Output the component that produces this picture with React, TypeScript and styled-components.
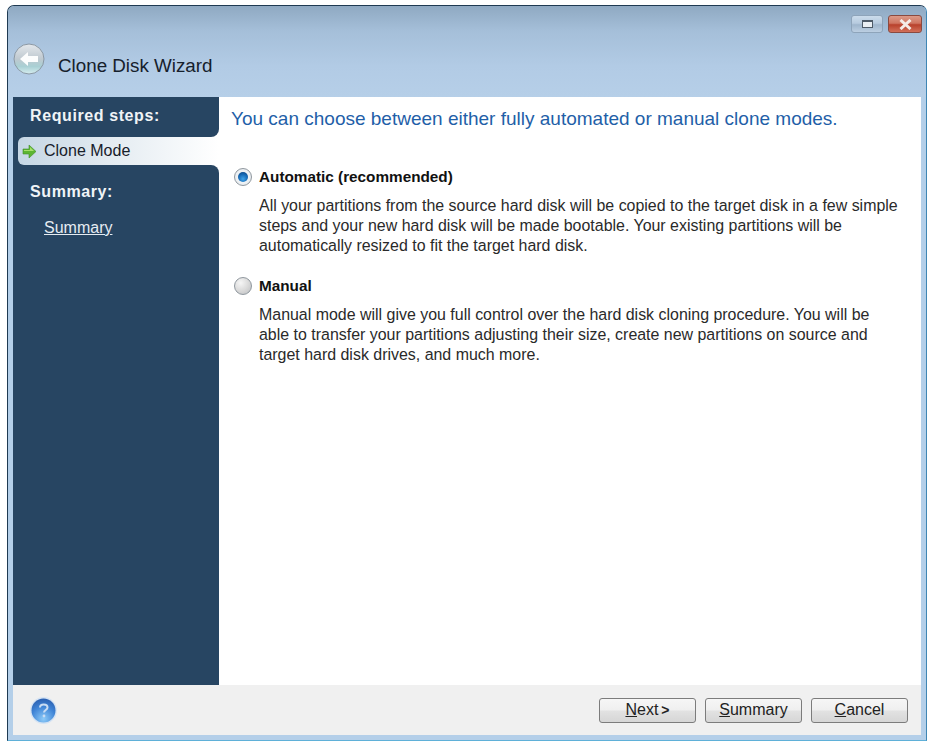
import React from 'react';
import styled, { createGlobalStyle } from 'styled-components';

const GlobalStyle = createGlobalStyle`
  html, body {
    margin: 0;
    padding: 0;
    background: #fff;
    font-family: "Liberation Sans", Arial, sans-serif;
  }
`;

const Page = styled.div`
  width: 928px;
  height: 742px;
  box-sizing: border-box;
  padding: 5px 1px 1px 7px;
  overflow: hidden;
`;

const Window = styled.div`
  height: 100%;
  box-sizing: border-box;
  display: flex;
  flex-direction: column;
  border: 1px solid #1f3a52;
  border-bottom-color: #5fb0d8;
  border-right-color: #3f86b4;
  border-radius: 7px 7px 0 0;
  background: #b4cfe9;
  padding: 0 5px 5px 5px;
`;

const TitleBar = styled.div`
  height: 91px;
  flex: none;
  position: relative;
  display: flex;
  align-items: flex-end;
  gap: 13px;
  margin: 0 -5px;
  padding: 0 5px 19px 5px;
  box-sizing: border-box;
  border-radius: 6px 6px 0 0;
  background: linear-gradient(#8fa9c2 0, #a5bfd9 25px, #b2cbe5 60px, #b6cfe8 100%);
`;

const TitleText = styled.div`
  font-size: 18.8px;
  color: #16202c;
  line-height: 24px;
`;

const BackButton = styled.svg`
  width: 32px;
  height: 32px;
  margin-bottom: 3px;
  flex: none;
`;

const WindowControls = styled.div`
  position: absolute;
  top: 9px;
  right: 4px;
  display: flex;
  gap: 5px;
`;

const ControlButton = styled.div<{ $close?: boolean }>`
  width: ${p => (p.$close ? '34px' : '32px')};
  height: 18px;
  box-sizing: border-box;
  border: 1px solid ${p => (p.$close ? '#8a4a40' : '#8ea4ba')};
  border-radius: 3px;
  display: flex;
  align-items: center;
  justify-content: center;
  background: ${p =>
    p.$close
      ? 'linear-gradient(#dc9a88 0, #cf7561 45%, #b8412c 55%, #d2705a 100%)'
      : 'linear-gradient(#cbdcec 0, #b7cbdf 45%, #9fb6cd 55%, #bccfe2 100%)'};
`;

const RestoreGlyph = styled.div`
  width: 11px;
  height: 8px;
  box-sizing: border-box;
  border: 1px solid #4d5a68;
  border-top-width: 2px;
  background: #e9eef3;
`;

const Content = styled.div`
  flex: 1;
  min-height: 0;
  display: flex;
  background: #fff;
`;

const Sidebar = styled.div`
  width: 206px;
  flex: none;
  display: flex;
  flex-direction: column;
  background: #fff;
`;

const SideBlock = styled.div<{ $grow?: boolean; $top?: boolean }>`
  background: #274562;
  box-sizing: border-box;
  flex: ${p => (p.$grow ? 1 : 'none')};
  height: ${p => (p.$grow ? 'auto' : '40px')};
  border-radius: ${p => (p.$top ? '0 0 8px 0' : '0 8px 0 0')};
  padding: ${p => (p.$top ? '10px 0 0 17px' : '18px 0 0 17px')};
`;

const SideHeading = styled.div`
  color: #f0f4f7;
  font-size: 16px;
  font-weight: bold;
  line-height: 18px;
  letter-spacing: 0.6px;
`;

const SideLink = styled.a`
  display: block;
  margin: 18px 0 0 14px;
  color: #e6ecf2;
  font-size: 16px;
  line-height: 18px;
  text-decoration: underline;
`;

const ActiveWrap = styled.div`
  background: #274562;
  height: 28px;
  flex: none;
  padding-left: 5px;
`;

const ActiveStep = styled.div`
  height: 100%;
  display: flex;
  align-items: center;
  gap: 7px;
  padding-left: 4px;
  border-radius: 6px 0 0 6px;
  background: linear-gradient(90deg, #c5d6e4 0, #e3ebf1 45%, #fff 100%);
  color: #17202a;
  font-size: 16px;
`;

const StepArrow = styled.svg`
  width: 15px;
  height: 15px;
  flex: none;
`;

const Main = styled.div`
  flex: 1;
  min-width: 0;
  padding: 9px 12px 0 12px;
`;

const Heading = styled.div`
  color: #1f5fa8;
  font-size: 19px;
  line-height: 26px;
  margin-bottom: 34px;
`;

const Option = styled.div`
  margin-bottom: 19px;
`;

const OptionHead = styled.div`
  display: flex;
  align-items: center;
  gap: 7px;
  margin-left: 3px;
  height: 22px;
`;

const Radio = styled.div<{ $on?: boolean }>`
  width: 18px;
  height: 18px;
  box-sizing: border-box;
  border-radius: 50%;
  flex: none;
  border: 1px solid #8f979e;
  display: flex;
  align-items: center;
  justify-content: center;
  background: ${p =>
    p.$on
      ? 'radial-gradient(circle at 50% 50%, #fff 0, #dfe5ea 100%)'
      : 'radial-gradient(circle at 35% 30%, #f6f6f6 0, #d8d8d8 55%, #b9bcbf 100%)'};
`;

const RadioDot = styled.div`
  width: 10px;
  height: 10px;
  border-radius: 50%;
  background: radial-gradient(circle at 50% 70%, #3fa3e8 0, #1467b3 55%, #0c3f78 100%);
`;

const OptionLabel = styled.div`
  font-size: 15.3px;
  font-weight: bold;
  color: #111;
`;

const OptionText = styled.div`
  margin: 8px 0 0 28px;
  font-size: 15.95px;
  line-height: 20px;
  color: #2a2a2a;
  white-space: nowrap;
`;

const Footer = styled.div`
  height: 50px;
  flex: none;
  box-sizing: border-box;
  display: flex;
  align-items: center;
  background: #f0f0f0;
  padding: 0 13px 0 17px;
`;

const HelpIcon = styled.svg`
  width: 27px;
  height: 27px;
  flex: none;
`;

const ButtonRow = styled.div`
  margin-left: auto;
  display: flex;
  gap: 9px;
`;

const Button = styled.button`
  width: 97px;
  height: 25px;
  box-sizing: border-box;
  padding: 0;
  border: 1px solid #7c7c7c;
  border-radius: 3px;
  background: linear-gradient(#f6f6f6 0, #efefef 48%, #e2e2e2 52%, #d6d6d6 100%);
  font-family: "Liberation Sans", Arial, sans-serif;
  font-size: 16px;
  color: #222;
`;

const NextMark = styled.b`
  font-size: 14px;
  margin-left: 3px;
`;

function BackArrow() {
  return (
    <BackButton viewBox="0 0 32 32">
      <defs>
        <linearGradient id="glass" x1="0" y1="0" x2="0" y2="1">
          <stop offset="0" stopColor="#e4e8ec" />
          <stop offset="0.5" stopColor="#bfc9d0" />
          <stop offset="0.75" stopColor="#a9d0d4" />
          <stop offset="1" stopColor="#d7eef0" />
        </linearGradient>
      </defs>
      <circle cx="16" cy="16" r="15" fill="url(#glass)" stroke="#8b98a4" />
      <path d="M7 16 L15 9 V13 H25 V19 H15 V23 Z" fill="#fff" opacity="0.95" />
    </BackButton>
  );
}

function GreenArrow() {
  return (
    <StepArrow viewBox="0 0 15 15">
      <path d="M1 5 H7 V1 L14 7.5 L7 14 V10 H1 Z" fill="#5cb531" stroke="#3f8f2a" strokeWidth="0.6" />
      <path d="M2 6 H8 V3 L12 7 H2 Z" fill="#a6e06a" />
    </StepArrow>
  );
}

function Help() {
  return (
    <HelpIcon viewBox="0 0 27 27">
      <defs>
        <radialGradient id="orb" cx="0.5" cy="0.85" r="0.85">
          <stop offset="0" stopColor="#8ccaf8" />
          <stop offset="0.6" stopColor="#3f84d6" />
          <stop offset="1" stopColor="#2a5fb0" />
        </radialGradient>
      </defs>
      <circle cx="13.5" cy="13.5" r="13.4" fill="#d5e3f3" />
      <circle cx="13.5" cy="13.5" r="12" fill="url(#orb)" />
      <path d="M10 10.5 C10 6.5 17.5 6.5 17.5 10.5 C17.5 13 14 13 14 15.5" fill="none" stroke="#c9dcf2" strokeWidth="2" />
      <circle cx="14" cy="19" r="1.4" fill="#c9dcf2" />
    </HelpIcon>
  );
}

export default function App() {
  return (
    <Page>
      <GlobalStyle />
      <Window>
        <TitleBar>
          <BackArrow />
          <TitleText>Clone Disk Wizard</TitleText>
          <WindowControls>
            <ControlButton><RestoreGlyph /></ControlButton>
            <ControlButton $close>
              <svg width="15" height="11" viewBox="0 0 15 11">
                <path d="M2.5 1 L12.5 10 M12.5 1 L2.5 10" stroke="#f4ece8" strokeWidth="3" />
              </svg>
            </ControlButton>
          </WindowControls>
        </TitleBar>
        <Content>
          <Sidebar>
            <SideBlock $top>
              <SideHeading>Required steps:</SideHeading>
            </SideBlock>
            <ActiveWrap>
              <ActiveStep><GreenArrow />Clone Mode</ActiveStep>
            </ActiveWrap>
            <SideBlock $grow>
              <SideHeading>Summary:</SideHeading>
              <SideLink>Summary</SideLink>
            </SideBlock>
          </Sidebar>
          <Main>
            <Heading>You can choose between either fully automated or manual clone modes.</Heading>
            <Option>
              <OptionHead>
                <Radio $on><RadioDot /></Radio>
                <OptionLabel>Automatic (recommended)</OptionLabel>
              </OptionHead>
              <OptionText>
                All your partitions from the source hard disk will be copied to the target disk in a few simple<br />
                steps and your new hard disk will be made bootable. Your existing partitions will be<br />
                automatically resized to fit the target hard disk.
              </OptionText>
            </Option>
            <Option>
              <OptionHead>
                <Radio />
                <OptionLabel>Manual</OptionLabel>
              </OptionHead>
              <OptionText>
                Manual mode will give you full control over the hard disk cloning procedure. You will be<br />
                able to transfer your partitions adjusting their size, create new partitions on source and<br />
                target hard disk drives, and much more.
              </OptionText>
            </Option>
          </Main>
        </Content>
        <Footer>
          <Help />
          <ButtonRow>
            <Button><u>N</u>ext<NextMark>&gt;</NextMark></Button>
            <Button><u>S</u>ummary</Button>
            <Button><u>C</u>ancel</Button>
          </ButtonRow>
        </Footer>
      </Window>
    </Page>
  );
}
